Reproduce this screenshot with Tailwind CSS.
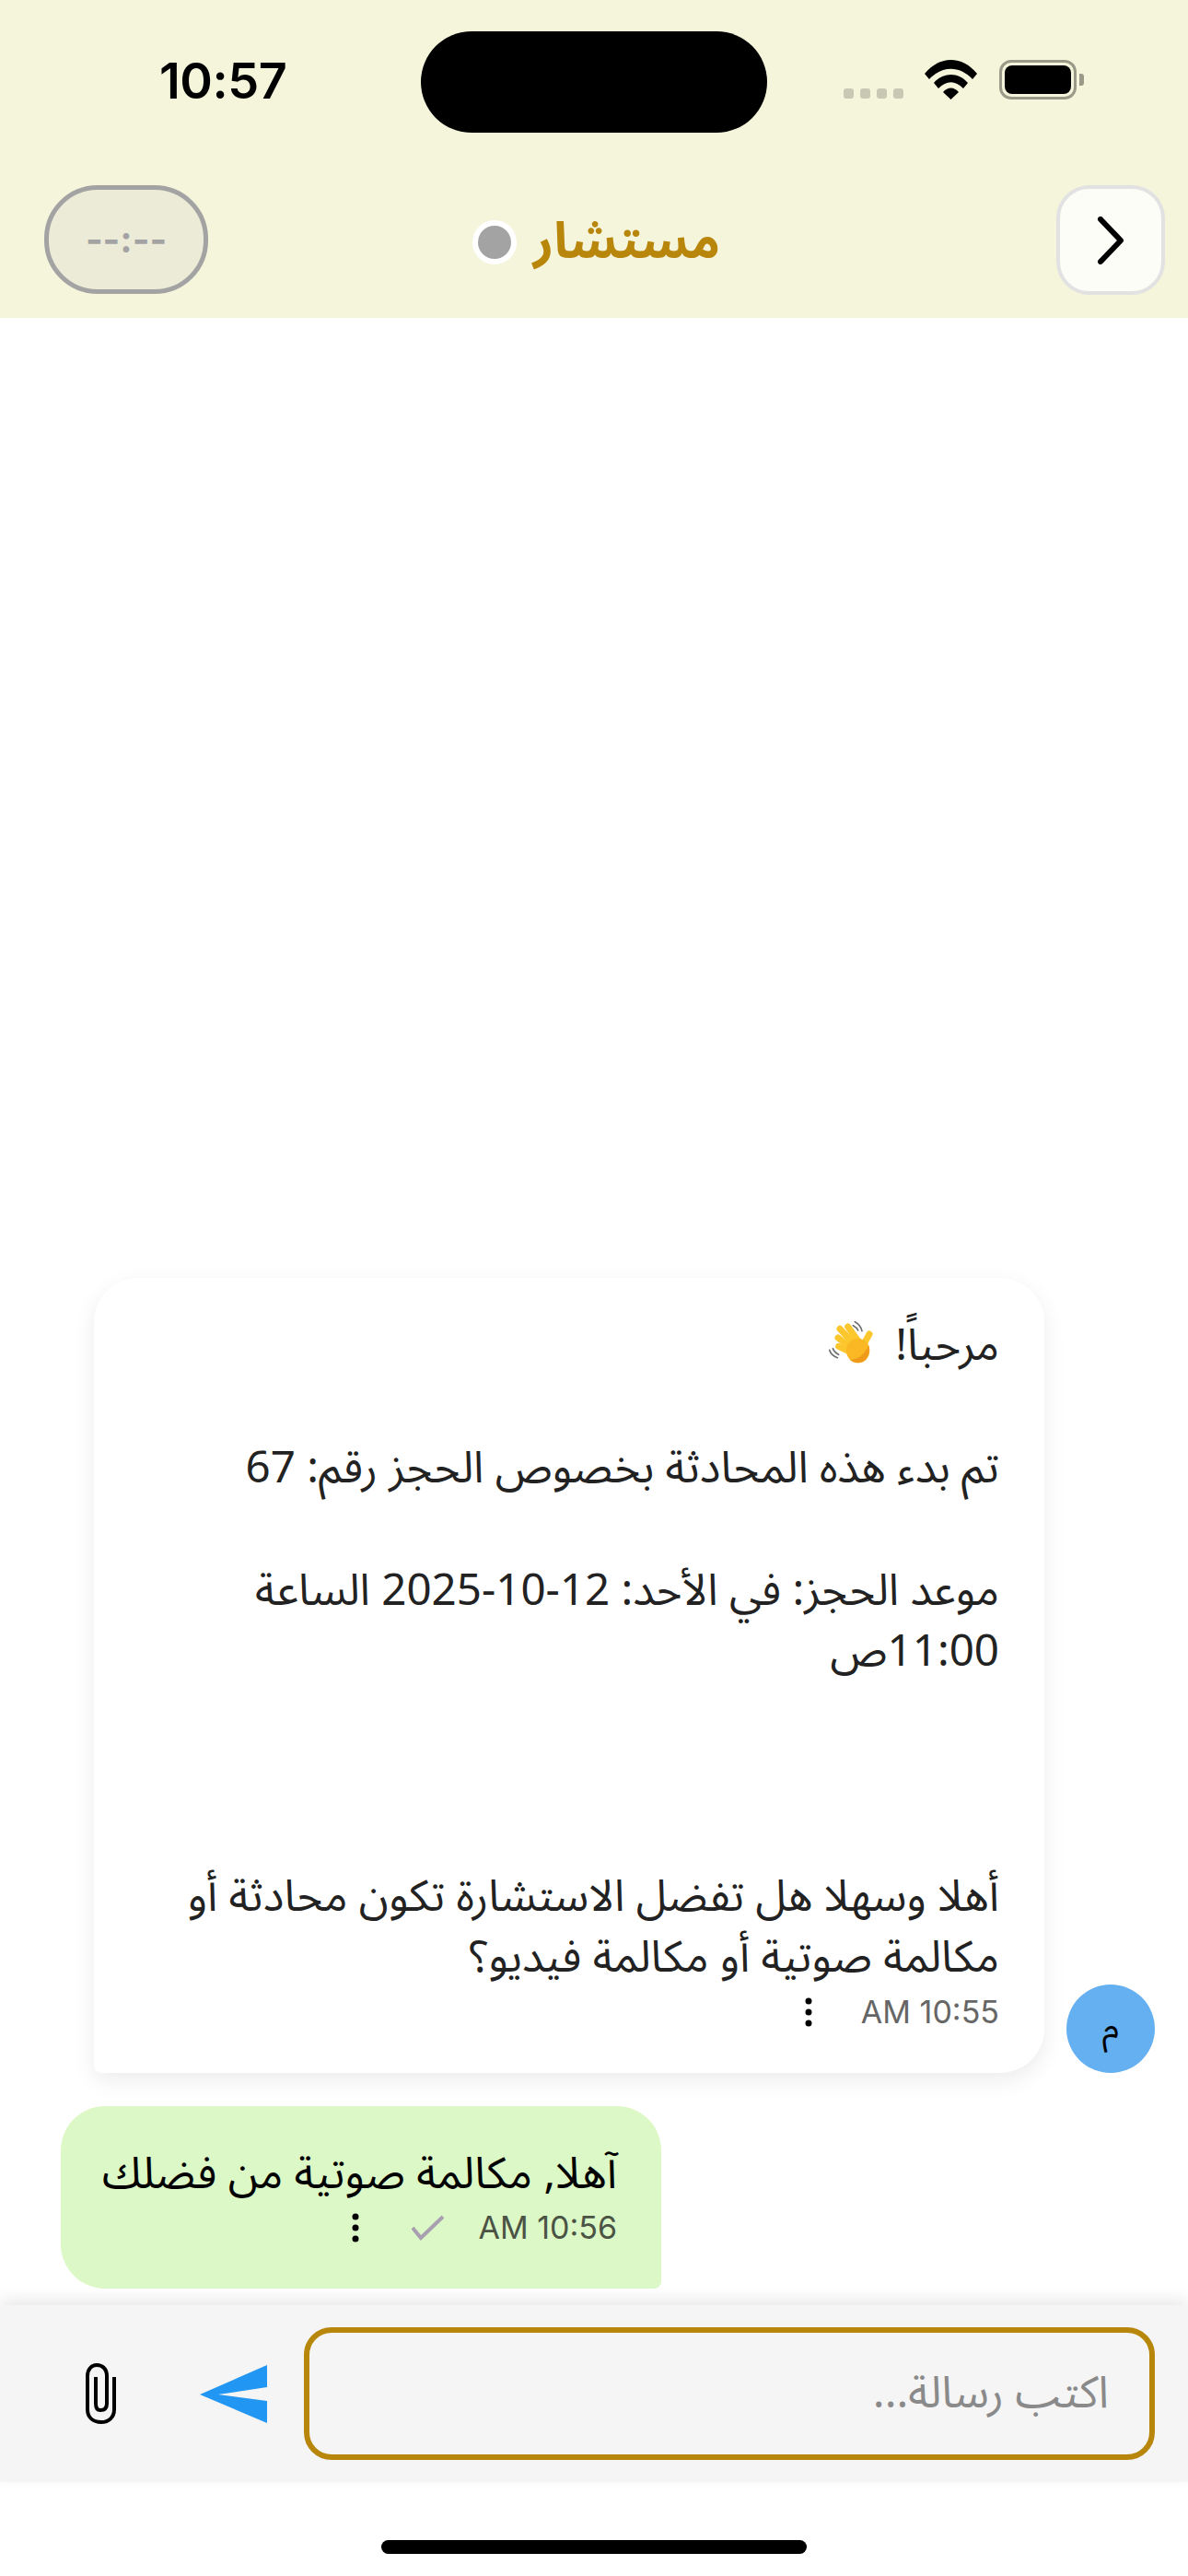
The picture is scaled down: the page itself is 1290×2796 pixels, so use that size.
<!doctype html>
<html lang="ar">
  <head>
    <meta charset="UTF-8" />
    <meta name="viewport" content="width=device-width, initial-scale=1.0" />
    <title>مستشار</title>
    <script src="https://cdn.jsdelivr.net/npm/@tailwindcss/browser@4"></script>
  </head>
  <body class="bg-white">
    <div class="relative w-[1290px] h-[2796px] flex flex-col overflow-hidden font-['Noto_Sans_Arabic','Noto_Sans','DejaVu_Sans',sans-serif]">
      <!-- header -->
      <header class="relative bg-[#f5f5dc] h-[345px] shrink-0 flex flex-col">
        <div class="absolute left-[457px] top-[34px] w-[376px] h-[110px] rounded-full bg-black"></div>
        <div class="h-[201px] flex items-start justify-between">
          <span class="mt-[58px] ml-[173px] text-[54px] leading-[60px] font-semibold tracking-[-0.5px] text-black font-['Inter',sans-serif]">10:57</span>
          <div class="mt-[65px] mr-[121px] flex items-start">
            <div class="mt-[31px] mr-[23px] flex gap-[7px]">
              <span class="w-[11px] h-[11px] rounded-[3px] bg-[#c8c8b4]"></span>
              <span class="w-[11px] h-[11px] rounded-[3px] bg-[#c8c8b4]"></span>
              <span class="w-[11px] h-[11px] rounded-[3px] bg-[#c8c8b4]"></span>
              <span class="w-[11px] h-[11px] rounded-[3px] bg-[#c8c8b4]"></span>
            </div>
            <svg class="mr-[24px]" width="57" height="43" viewBox="0 0 57 43" fill="#000">
              <path d="M0 15 C16 -5 41 -5 57 15 L52 21 C38 6 19 6 5 21 Z" />
              <path d="M10 25 C20 13 37 13 47 25 L42 31 C33 22 24 22 15 31 Z" />
              <path d="M20 35 C25 29 32 29 37 35 L28.500 43 Z" />
            </svg>
            <div class="relative w-[84px] h-[43px] rounded-[13px] border-[3px] border-[#9a9a88] p-[3px]">
              <div class="w-full h-full rounded-[8px] bg-black"></div>
              <span class="absolute -right-[11px] top-[12px] w-[5px] h-[13px] rounded-r-[3px] bg-[#9a9a88]"></span>
            </div>
          </div>
        </div>
        <div class="grid grid-cols-[1fr_auto_1fr] items-start pl-[48px] pr-[25px]">
          <div class="justify-self-start w-[178px] h-[118px] rounded-[58px] bg-[#ebebd7] border-[5px] border-[#a3a3a3] flex items-center justify-center text-[40px] font-bold text-[#a3a3a3] font-['Inter',sans-serif]">--:--</div>
          <div class="mt-[3px] -ml-[18px] flex items-center gap-[18px] h-[118px]">
            <span class="w-[48px] h-[48px] rounded-full bg-[#a3a3a3] border-[6px] border-white"></span>
            <span dir="rtl" class="text-[54px] font-bold text-[#b8860b]">مستشار</span>
          </div>
          <button class="justify-self-end w-[118px] h-[119px] rounded-[36px] bg-[#fcfdf7] border-[4px] border-[#e2e2e2] flex items-center justify-center">
            <svg width="30" height="52" viewBox="0 0 30 52" fill="none" stroke="#000" stroke-width="6" stroke-linecap="round" stroke-linejoin="round">
              <path d="M4 3 L26 26 L4 49" />
            </svg>
          </button>
        </div>
      </header>

      <!-- messages -->
      <main dir="rtl" class="flex-1 flex flex-col justify-end gap-[36px] pr-[36px] pl-[66px] pb-[18px] text-[47.5px] leading-[66.4px]">
        <div class="flex items-end gap-[24px]">
          <div class="w-[96px] h-[96px] rounded-full bg-[#64b0f0] flex items-center justify-center text-[38px] text-black">م</div>
          <div class="w-[1032px] pr-[49px] pl-[44px] pt-[41px] pb-[48px] rounded-[48px] rounded-bl-[8px] bg-white shadow-[0_8px_24px_rgba(0,0,0,0.08)] text-[#222]">
            <div class="whitespace-pre-line mb-[7px]">مرحباً! <svg class="inline-block align-[-6px] mr-[10px]" width="50" height="50" viewBox="60 40 150 150">
                <g fill="none" stroke="#6f6f6f" stroke-width="5" stroke-linecap="round">
                  <path d="M145 48 Q164 58 168 78" />
                  <path d="M139 60 Q151 66 155 76" />
                  <path d="M62 140 Q68 158 88 165" />
                  <path d="M73 135 Q78 148 92 155" />
                </g>
                <g fill="none" stroke="#fcc62d" stroke-width="21" stroke-linecap="round">
                  <path d="M155 110 L122 64" />
                  <path d="M140 118 L96 71" />
                  <path d="M130 130 L90 100" />
                  <path d="M128 145 L92 128" />
                  <path d="M172 125 L192 88" />
                </g>
                <ellipse cx="155" cy="142" rx="38" ry="40" fill="#f9b824" />
                <path d="M128 172 Q155 192 180 172 Q196 150 190 125 Q170 170 128 172 Z" fill="#f09a1c" />
              </svg>

تم بدء هذه المحادثة بخصوص الحجز رقم: 67

موعد الحجز: في الأحد: 12-10-2025 الساعة 11:00ص



أهلا وسهلا هل تفضل الاستشارة تكون محادثة أو مكالمة صوتية أو مكالمة فيديو؟</div>
            <div class="flex items-center h-[36px] text-[34px] leading-[36px] text-[#666]">
              <span class="font-['Inter',sans-serif]">10:55 AM</span>
              <svg class="mr-[52px]" width="10" height="32" viewBox="0 0 10 32" fill="#000"><circle cx="5" cy="4" r="3.500" /><circle cx="5" cy="16" r="3.500" /><circle cx="5" cy="28" r="3.500" /></svg>
            </div>
          </div>
        </div>
        <div class="flex justify-end">
          <div class="w-[652px] pr-[48px] pl-[30px] pt-[41px] pb-[48px] rounded-[48px] rounded-br-[8px] bg-[#dcf8c6] text-black">
            <div class="mb-[7px]">آهلا, مكالمة صوتية من فضلك</div>
            <div class="flex items-center h-[36px] text-[34px] leading-[36px] text-[#4b5345]">
              <span class="font-['Inter',sans-serif]">10:56 AM</span>
              <svg class="mr-[36px]" width="36" height="28" viewBox="0 0 36 28" fill="none" stroke="#a89fb0" stroke-width="4"><path d="M1 14 L10 25 L34 2" /></svg>
              <svg class="mr-[56px]" width="10" height="32" viewBox="0 0 10 32" fill="#000"><circle cx="5" cy="4" r="3.500" /><circle cx="5" cy="16" r="3.500" /><circle cx="5" cy="28" r="3.500" /></svg>
            </div>
          </div>
        </div>
      </main>

      <!-- input bar -->
      <div class="relative h-[192px] shrink-0 bg-[#f5f5f5] shadow-[0_-6px_16px_rgba(0,0,0,0.09)] flex items-center pl-[93px] pr-[36px]">
        <svg width="33" height="66" viewBox="0 0 33 66" fill="none" stroke="#000" stroke-width="4">
          <path d="M31 15 V50 C31 59 25 64 17 64 C8 64 2 59 2 50 V14 C2 6 7 2 12 2 C18 2 23 6 23 14 V44 C23 49 20 51 16 51 C12 51 11 48 11 44 V15" />
        </svg>
        <svg class="ml-[91px]" width="73" height="63" viewBox="0 0 73 63" fill="#2196f3"><path d="M0 32 L73 0 V24 L20 32 L73 39 V63 Z" /></svg>
        <div dir="rtl" class="ml-[40px] flex-1 h-[144px] rounded-[30px] border-[6px] border-[#b8860b] flex items-center px-[44px] text-[48px] text-[#8a8a8a]">اكتب رسالة...</div>
      </div>

      <!-- home indicator -->
      <div class="h-[102px] shrink-0 flex justify-center pt-[63px]">
        <div class="w-[462px] h-[15px] rounded-full bg-black"></div>
      </div>
    </div>
  </body>
</html>
